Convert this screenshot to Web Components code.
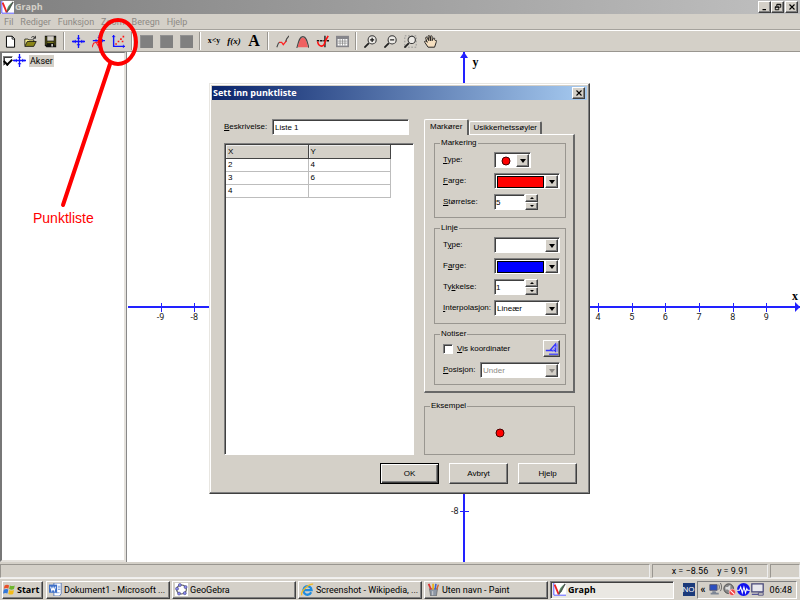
<!DOCTYPE html>
<html lang="nb">
<head>
<meta charset="utf-8">
<title>Graph</title>
<style>
  html, body { margin: 0; height: 100%; }
  body {
    --face: #d4d0c8; --light: #fff; --shade: #808080; --dark: #404040;
    --ui: "Liberation Sans", sans-serif;
    --tahoma: "Roboto", "Liberation Sans", sans-serif;
    --tahoma-bold: "Open Sans", "DejaVu Sans", sans-serif;
    overflow: hidden; color: #000; font: 9px/12px var(--tahoma);
  }
</style>
</head>
<body>
<graph-desktop></graph-desktop>
<script>
const ICONS = {
  logo: '<path fill="#fff" d="M0 0h16v16H0z"/><path d="M1 0v15h15" stroke="#33f" fill="none"/><path d="M7 14c0-6 3-10 8-13l-4 9z" fill="#596"/><path d="M2 2l5 12" stroke="#e22" stroke-width="2.200"/><path d="M7 14L15 1" stroke="#555" stroke-width="1.600"/>',
  doc: '<path d="M3 1.500h7l3 3V15H3z" fill="#fff" stroke="#000" stroke-width="1.200"/><path d="M10 1.500v3.500h3" fill="none" stroke="#000"/>',
  open: '<path d="M1 13V5h4l1 1h6v3" fill="#f4ec90" stroke="#111"/><path d="M1 14l3-6h11l-3 6z" fill="#8a8518" stroke="#111"/><path d="M9 3c2-2 4-1 5 1m0-3v3h-3" fill="none" stroke="#111"/>',
  save: '<path d="M1 1h14v14H3l-2-2z" fill="#111"/><path d="M4 1.500h8V7H4z" fill="#d4d0c8"/><path d="M2 2h1v10H2zM13 3h1v10h-1z" fill="#77751c"/><path d="M4 8h8v2H4z" fill="#77751c"/><path d="M9 11h2v3H9z" fill="#d4d0c8"/>',
  axes: '<path d="M8 0v16M0 8h16" stroke="#11f" stroke-width="1.600"/><path d="M4 6v4M12 6v4M6 4h4M6 12h4M2 7v2M14 7v2" stroke="#11f" stroke-width="1.200"/>',
  func: '<path d="M9 0v16M1 7h15" stroke="#11f" stroke-width="1.600"/><path d="M5 5v4M13 5v4M7 3h4M7 12h4" stroke="#11f"/><path d="M0 15l2-5 3-1 3 5M6 10l6-9" fill="none" stroke="#f22" stroke-width="1.400"/>',
  points: '<path d="M2 0v14h14" fill="none" stroke="#11f" stroke-width="1.700"/><path d="M0 2h4M14 12v4" stroke="#11f"/><path d="M4 10h2v2H4zM7 7h2v2H7zM10 4h2v2h-2zM13 1h2v2h-2zM12 7h2v2h-2z" fill="#f11"/>',
  block: '<path d="M0 0h16v16H0z" fill="#808080"/><path d="M.5 16V.5H16" fill="none" stroke="#999"/>',
  curve: '<path d="M1 15l2-5 2-1" fill="none" stroke="#444" stroke-width="1.300"/><path d="M4 9l3 0 2 3 4-5" fill="none" stroke="#f22" stroke-width="1.600"/><path d="M12 8l1-3 3-4" fill="none" stroke="#444" stroke-width="1.300"/>',
  area: '<path d="M2 15C4 8 5 3 8.500 3S13 8 15 15z" fill="#f06060"/><path d="M1 16C3 9 4 2 8.500 2S14 9 16 16" fill="none" stroke="#444" stroke-width="1.300"/>',
  tangent: '<path d="M11 1v14" stroke="#111" stroke-width="1.600"/><path d="M1 7h15" stroke="#111" stroke-width="2" stroke-dasharray="3 1"/><path d="M2 8c1 7 8 8 9 0l4-7" fill="none" stroke="#f11" stroke-width="2"/>',
  table: '<path d="M0 1h16v14H0z" fill="#85858a"/><path d="M2 5h12v8H2z" fill="#fff"/><path d="M2 7.500h12M2 10h12M5 5v8M8 5v8M11 5v8" stroke="#777" stroke-width=".8"/>',
  zin: '<circle cx="10" cy="6" r="5" fill="#eceae6" stroke="#333" stroke-width="1.300"/><path d="M6 10l-5.500 5.500" stroke="#222" stroke-width="2.200"/><path d="M10 3.500v5M7.500 6h5" stroke="#111" stroke-width="1.400"/>',
  zout: '<circle cx="10" cy="6" r="5" fill="#eceae6" stroke="#333" stroke-width="1.300"/><path d="M6 10l-5.500 5.500" stroke="#222" stroke-width="2.200"/><path d="M7.500 6h5" stroke="#111" stroke-width="1.400"/>',
  zbox: '<path d="M1 1h14v14H1z" fill="none" stroke="#888" stroke-dasharray="2 2"/><circle cx="9.500" cy="6" r="4.500" fill="#eceae6" stroke="#333" stroke-width="1.300"/><path d="M6 10l-5.500 5.500" stroke="#222" stroke-width="2.200"/>',
  hand: '<path d="M5 15L1 9c-1-2 1-2 2-1l1 1L2 4c0-2 2-2 2 0l2 3-1-5c0-2 2-2 2 0l1 5V2c0-2 2-1 2 0v5l1.500-3c1-1 2 0 1.500 1.500L14 7c2-1 2 1 1 2l-2 6z" fill="#f5dfc0" stroke="#222" stroke-width="1.200"/>',
  min: '<path d="M3 12h7v2.500H3z" fill="#000"/>',
  restore: '<path d="M5.500 2.500h8v6h-3M5.500 3.500h8M5.500 3v3" fill="none" stroke="#000" stroke-width="1.800"/><path d="M2.500 7.500h7v6h-7zM2 8.500h8" fill="none" stroke="#000" stroke-width="1.800"/>',
  close: '<path d="M3 3l10 10M13 3L3 13" stroke="#000" stroke-width="2.200"/>',
  fontA: '<path d="M1 10.500h5l7-8v10M4 10.500h9" fill="none" stroke="#33f" stroke-width="1.700"/><path d="M9 12l6-9v9" fill="none" stroke="#77f" stroke-width="1.300"/><path d="M5 15h11" stroke="#33f" stroke-width="1.500"/>',
  windows: '<path d="M2 3c2-1 4-1 5.500 0L6.500 7C5 6 3 6 1 7z" fill="#e8502a"/><path d="M8.500 3c2 1 4 1 6 0l-1 4.500c-2 1-4 1-6 0z" fill="#6fb52c"/><path d="M1 8c2-1 4-1 5.500 0L5.500 13C4 12 2 12 0 13z" fill="#3578d8"/><path d="M7.500 8.500c2 1 4 1 6 0l-1 5c-2 1-4 1-6 0z" fill="#f5bd18"/>',
  word: '<path d="M6 0h9v13l-2 3H6z" fill="#fff" stroke="#4a6cb0"/><path d="M11 4h3M11 6h3M11 8h3M8 12h5" stroke="#6b94d8"/><path d="M0 2h10v10H0z" fill="#3c6fc8"/><path d="M2 4.500l1.500 5 1.500-4 1.500 4 1.500-5" fill="none" stroke="#fff" stroke-width="1.300"/>',
  geo: '<path d="M0 0h16v16H0z" fill="#fff"/><ellipse cx="8" cy="8" rx="6" ry="5.500" fill="none" stroke="#555" stroke-width="1.300"/><g fill="#8888ee" stroke="#336" stroke-width=".6"><circle cx="2.500" cy="7" r="1.900"/><circle cx="6" cy="2.500" r="1.900"/><circle cx="13" cy="5" r="1.900"/><circle cx="12" cy="12.500" r="1.900"/><circle cx="5" cy="13" r="1.900"/></g>',
  ie: '<path d="M12.500 11.500A5 5.300 0 1 1 13 8.700H4" fill="none" stroke="#1f8ce0" stroke-width="2.800"/><path d="M1 15C-1 11 9 1 15 1.500" fill="none" stroke="#f2b822" stroke-width="1.600"/>',
  paint: '<path d="M3 7h10l-1.500 9h-7z" fill="#8d97a5" stroke="#555" stroke-width=".7"/><path d="M5 8L2 1" stroke="#d33" stroke-width="2.200"/><path d="M7.500 8V1" stroke="#e8b21c" stroke-width="2.200"/><path d="M10 8l1-7" stroke="#3a62d0" stroke-width="2"/><path d="M12 8l2-6" stroke="#c63" stroke-width="1.800"/><path d="M7 10v5" stroke="#ddd"/>',
  net: '<path d="M1 2h9v7H1z" fill="#2c4fc0" stroke="#556"/><path d="M4 10h4l1 2h3v2H2v-2h2z" fill="#7c8594"/><path d="M12 2c1 2 1 4 0 6M14 0c2 3 2 7 0 10" fill="none" stroke="#555"/>',
  speaker: '<circle cx="7" cy="7" r="6" fill="#888" stroke="#444"/><path d="M3 5l3 0 3-3v9L6 8H3z" fill="#ddd"/><circle cx="11.500" cy="11.500" r="4" fill="#e44" stroke="#fff" stroke-width=".6"/><path d="M9 9l5 5" stroke="#fff" stroke-width="1.300"/>',
  wave: '<circle cx="8" cy="8" r="8" fill="#11e"/><path d="M0 9h3l1.500-4 2 7 2-7 2 7 1.500-5 1 2h3" fill="none" stroke="#fff" stroke-width="1.300"/>',
  monitor: '<path d="M1 1h14v10H1z" fill="#e8e8ee" stroke="#447" stroke-width="1.500"/><path d="M1 14h14" stroke="#559" stroke-width="1.600"/><path d="M9 12h6v3H9z" fill="#d4d0c8" stroke="#447"/>'
};

function define(name, css, render) {
  customElements.define(name, class extends HTMLElement {
    constructor() { super(); this.attachShadow({ mode: "open" }); }
    connectedCallback() {
      if (this.shadowRoot.childNodes.length) return;
      const t = document.createElement("template");
      t.innerHTML = `<style>*{box-sizing:border-box}${css}</style>${render(this)}`;
      this.shadowRoot.append(t.content.cloneNode(true));
    }
  });
}
const accel = s => s.replace(/_(.)/, "<u>$1</u>");
const at = (el, n, d = "") => el.getAttribute(n) ?? d;
const RAISED = "border:1px solid;border-color:var(--light) var(--dark) var(--dark) var(--light);box-shadow:inset -1px -1px 0 var(--shade);background:var(--face)";
const SUNKEN = "border:1px solid;border-color:var(--shade) var(--light) var(--light) var(--shade);box-shadow:inset 1px 1px 0 var(--dark)";

define("ui-icon", ":host{display:block;flex:none;width:13px;height:13px} svg{display:block;width:100%;height:100%}",
  el => `<svg viewBox="0 0 16 16" fill="none" aria-hidden="true">${ICONS[at(el, "name")]}</svg>`);

define("caption-button", `:host{display:block;flex:none} button{display:grid;place-items:center;width:13px;height:12px;padding:0;${RAISED}} ui-icon{width:8px;height:8px}`,
  el => `<button aria-label="${at(el, "label")}"><ui-icon name="${at(el, "icon")}"></ui-icon></button>`);

define("title-bar", `
  :host{display:flex;align-items:center;flex:none;height:14px;padding:0 2px 0 1px;gap:1px;background:linear-gradient(90deg,#808080,#c0c0c0);color:#d4d0c8}
  :host([active]){background:linear-gradient(90deg,#0a246a,#a6caf0);color:#fff}
  h1{flex:1;margin:0;font:bold 9px/12px var(--tahoma-bold)}
  div{display:flex}`,
  () => `<slot name="icon"></slot><h1><slot></slot></h1><div><slot name="sizers"></slot></div><slot name="close"></slot>`);

define("menu-bar", `
  :host{display:block;flex:none;border-bottom:1px solid #a5a29c}
  nav{display:flex;gap:7px;padding:2px 4px;height:15px}
  button{border:0;padding:0;background:none;color:#8c8984;font:9px/12px var(--tahoma)}`,
  () => `<nav>${["Fil", "Rediger", "Funksjon", "Zoom", "Beregn", "Hjelp"].map(t => `<button>${t}</button>`).join("")}</nav>`);

define("tool-bar", `
  :host{display:flex;flex:none;align-items:center;height:22px;border-top:1px solid #fff;border-bottom:1px solid #999690}
  .sep{width:2px;height:18px;margin:0 3px;border-left:1px solid #999690;border-right:1px solid #fff}
  button{display:grid;place-items:center;width:20px;height:20px;padding:0;border:0;background:none;font:bold 8px/12px "Liberation Serif",serif}
  .italic{font-style:italic;font-size:9px} .big{font-size:16px}`,
  () => [
    ["doc:Ny", "open:Åpne", "save:Lagre"], ["axes:Akser", "func:Sett inn funksjon", "points:Sett inn punktliste"],
    ["block:Tangent", "block:Skravering", "block:Relasjon"], ["=x&lt;y", "italic=f(x)", "big=A"],
    ["curve:Kurvelengde", "area:Areal", "tangent:Evaluer", "table:Tabell"], ["zin:Zoom inn", "zout:Zoom ut", "zbox:Zoom vindu", "hand:Flytt"]
  ].map(g => g.map(b => {
    if (b.includes("=")) { const [c, t] = b.split("="); return `<button class="${c}">${t}</button>`; }
    const [i, l] = b.split(":"); return `<button aria-label="${l}"><ui-icon name="${i}"></ui-icon></button>`;
  }).join("")).join('<span class="sep"></span>'));

define("tick-box", `
  :host{display:block} label{display:flex;align-items:center;gap:4px;white-space:nowrap}
  input{appearance:none;display:grid;place-items:center;width:10px;height:10px;margin:0;background:#fff;${SUNKEN}}
  input:checked::after{content:"";width:6px;height:4px;border:solid #000;border-width:0 0 2px 2px;transform:rotate(-45deg)}`,
  el => `<label><input type="checkbox"${el.hasAttribute("checked") ? " checked" : ""}${el.hasAttribute("name") ? ` aria-label="${at(el, "name")}"` : ""}><slot></slot></label>`);

define("function-list", `
  :host{display:block;flex:none;width:126px;padding-top:1px;background:#fff;border:solid;border-width:1px 2px 2px 2px;border-color:#777 #e4e1dc #e4e1dc #777}
  .row{display:flex;align-items:center;padding:0 1px;height:13px}
  .name{margin-left:3px;padding:0 1px;background:var(--face)}`,
  () => `<div class="row"><tick-box checked name="Vis akser"></tick-box><ui-icon name="axes"></ui-icon><span class="name">Akser</span></div>`);

define("graph-plot", `
  :host{display:block;position:relative;flex:1;min-width:0;overflow:hidden;background:#fff;border-left:1px solid #888}
  .ax{position:absolute;background:#2222ff} .x{left:1px;right:0;top:50%;height:2px;margin-top:-1px} .y{top:0;bottom:0;left:50%;width:2px;margin-left:-1px}
  .arrow{position:absolute;width:0;height:0;border:solid transparent}
  .right{right:0;top:50%;margin-top:-5px;border-width:5px 0 5px 5px;border-left-color:#22f}
  .up{top:0;left:50%;margin-left:-4px;border-width:0 4px 6px;border-bottom-color:#22f}
  .tx{position:absolute;top:50%;width:1px;height:9px;margin-top:-4px;background:#22f}
  .ty{position:absolute;left:50%;height:1px;width:9px;margin-left:-4px;background:#22f}
  span{position:absolute;color:#222} .lx{top:50%;width:20px;margin:4px 0 0 -10px;text-align:center}
  .ly{right:50%;margin:-6px 5px 0 0}
  b{position:absolute;font:bold 12px/12px "Liberation Serif",serif} .nx{right:2px;top:50%;margin-top:-17px} .ny{left:50%;top:4px;margin-left:9px}`,
  () => {
    let h = '<div class="ax x"></div><div class="ax y"></div><i class="arrow right"></i><i class="arrow up"></i><b class="nx">x</b><b class="ny">y</b>';
    for (let i = -9; i <= 9; i++) {
      if (!i) continue;
      h += `<i class="tx" style="left:${50 + i * 5}%"></i>`;
      if (i < -7 || i > 3) h += `<span class="lx" style="left:${50 + i * 5}%">${i}</span>`;
    }
    return h + '<i class="ty" style="top:90%"></i><span class="ly" style="top:90%">-8</span>';
  });

define("status-bar", `
  :host{display:flex;flex:none;gap:2px;height:16px;padding:2px 0 0}
  div{border:1px solid;border-color:#999690 #eee #eee #999690;white-space:pre;text-align:center;line-height:12px}
  .wide{flex:1} .pos{width:116px} .end{width:30px}`,
  () => `<div class="wide"></div><div class="pos">x = −8.56    y = 9.91</div><div class="end"></div>`);

define("group-box", `
  :host{display:block} fieldset{margin:0;min-width:0;padding:4px 5px 7px 8px;border:1px solid #999690}
  legend{padding:0 1px;margin-left:-3px;font:8px/10px var(--ui)}
  .rows{display:flex;flex-direction:column;gap:5px}
  :host([tight]) fieldset{padding-top:1px;padding-bottom:6px}
  :host([sample]) fieldset{padding:6px 0 9px} :host([sample]) legend{margin-left:5px} :host([sample]) .rows{align-items:center}`,
  el => `<fieldset><legend>${at(el, "title-text")}</legend><div class="rows"><slot></slot></div></fieldset>`);

define("combo-box", `
  :host{display:flex;align-items:center;height:16px;font:8px/12px var(--ui)}
  label{width:51px;flex:none;white-space:nowrap} :host([compact]) label{width:37px}
  .box{display:grid;flex:1;height:16px;grid-template-columns:1fr 13px;align-items:center;background:#fff;padding:1px;${SUNKEN}}
  :host([short]) .box{flex:none;width:37px}
  select{grid-area:1/1/2/3;appearance:none;width:100%;height:12px;margin:0;border:0;padding:0 14px 0 1px;background:none;color:#000;font:8px/12px var(--ui);opacity:1}
  select:disabled{color:#8c8984}
  .swatch{grid-area:1/1;height:12px;margin:0 1px;border:1px solid #000}
  svg{grid-area:1/1;justify-self:center;width:10px;height:10px}
  .arrow{grid-area:1/2;display:grid;place-items:center;height:13px;pointer-events:none;${RAISED}}
  .arrow::after{content:"";border:solid transparent;border-width:4px 3px 0;border-top-color:#000}
  select:disabled ~ .arrow::after{border-top-color:#8c8984}`,
  el => `<label for="s">${accel(at(el, "label"))}</label><div class="box"><select id="s"${el.hasAttribute("disabled") ? " disabled" : ""}><option>${at(el, "value")}</option></select>` +
    (el.hasAttribute("color") ? `<span class="swatch" style="background:${at(el, "color")}"></span>` : "") +
    (el.hasAttribute("marker") ? `<svg viewBox="0 0 10 10"><circle cx="5" cy="5" r="4" fill="#f00" stroke="#400"/></svg>` : "") +
    `<span class="arrow"></span></div>`);

define("spin-box", `
  :host{display:flex;align-items:center;height:16px;font:8px/12px var(--ui)} label{width:51px;flex:none}
  input{width:31px;height:16px;padding:0 1px;border-radius:0;font:8px/12px var(--ui);background:#fff;${SUNKEN}}
  div{display:grid;width:13px;height:16px}
  button{display:grid;place-items:center;height:8px;padding:0;${RAISED}}
  button::after{content:"";border:solid transparent;border-width:0 2px 2px;border-bottom-color:#000}
  button+button::after{border-width:2px 2px 0;border-top-color:#000}`,
  el => `<label for="n">${accel(at(el, "label"))}</label><input id="n" value="${at(el, "value")}"><div><button aria-label="Opp"></button><button aria-label="Ned"></button></div>`);

define("push-button", `
  :host{display:block} button{display:block;width:59px;height:21px;padding:0;font:8px/12px var(--ui);${RAISED}}
  :host([default]) button{border-color:#000;box-shadow:inset 1px 1px 0 #fff,inset -1px -1px 0 var(--dark),inset -2px -2px 0 var(--shade)}`,
  () => `<button><slot></slot></button>`);

define("point-table", `
  :host{display:block;background:#fff;${SUNKEN};padding:1px}
  table{border-collapse:separate;border-spacing:0;width:165px;table-layout:fixed;font:8px/12px var(--ui)}
  th,td{height:13px;padding:0 2px;text-align:left;font-weight:normal;border:solid #bdbdbd;border-width:0 1px 1px 0}
  th{height:14px;background:var(--face);border-color:#444;box-shadow:inset 1px 1px 0 #eee}`,
  () => `<table><thead><tr><th>X</th><th>Y</th></tr></thead><tbody><tr><td>2</td><td>4</td></tr><tr><td>3</td><td>6</td></tr><tr><td>4</td><td></td></tr></tbody></table>`);

define("tab-panel", `
  :host{display:block;font:8px/12px var(--ui)}
  .tabs{display:flex;align-items:flex-end;height:15px}
  button{height:13px;padding:0 3px;font:8px/12px var(--ui);white-space:nowrap;background:var(--face);border:solid;border-width:1px 2px 0 1px;border-color:#fff #606060 #fff #fff;border-radius:2px 2px 0 0}
  button[aria-selected=true]{height:16px;margin-bottom:-1px;padding:0 5px 2px;position:relative}
  .page{display:flex;flex-direction:column;gap:5px;padding:3px 7px 6px 9px;border:solid;border-width:1px 2px 2px 1px;border-color:#fff #686868 #686868 #fff}`,
  () => `<div class="tabs" role="tablist"><button role="tab" aria-selected="true">Markører</button><button role="tab" aria-selected="false">Usikkerhetssøyler</button></div><div class="page" role="tabpanel"><slot></slot></div>`);

define("point-dialog", `
  :host{display:block;background:var(--face);border:1px solid;border-color:#e8e6e1 var(--dark) var(--dark) #e8e6e1;box-shadow:inset -1px -1px 0 var(--shade),inset 1px 1px 0 #fff;padding:2px 2px 9px;font:8px/12px var(--ui)}
  .body{display:grid;grid-template-columns:190px 151px;gap:0 10px;padding:19px 12px 0}
  .left{display:flex;flex-direction:column;gap:8px}
  .desc{display:flex;align-items:center;height:16px} .desc label{width:48px}
  .desc input{width:137px;height:16px;padding:0 2px;font:8px/12px var(--ui);background:#fff;${SUNKEN}}
  point-table{flex:1}
  .right{display:flex;flex-direction:column;gap:8px}
  .note{display:flex;justify-content:space-between;align-items:center;height:17px}
  .note button{display:grid;place-items:center;width:17px;height:17px;padding:0;${RAISED}}
  .buttons{display:flex;justify-content:flex-end;gap:10px;padding:8px 10px 0}
  svg{display:block;width:10px;height:28px}`,
  () => `<title-bar active>Sett inn punktliste<caption-button slot="close" icon="close" label="Lukk"></caption-button></title-bar>
  <div class="body">
    <div class="left"><div class="desc"><label for="d"><u>B</u>eskrivelse:</label><input id="d" value="Liste 1"></div><point-table></point-table></div>
    <div class="right">
      <tab-panel>
        <group-box title-text="Markering"><combo-box label="_Type:" marker short></combo-box><combo-box label="_Farge:" color="#f00"></combo-box><spin-box label="_Størrelse:" value="5"></spin-box></group-box>
        <group-box title-text="Linje"><combo-box label="T_ype:"></combo-box><combo-box label="F_arge:" color="#00f"></combo-box><spin-box label="Ty_kkelse:" value="1"></spin-box><combo-box label="_Interpolasjon:" value="Lineær"></combo-box></group-box>
        <group-box title-text="Notiser" tight><div class="note"><tick-box><span><u>V</u>is koordinater</span></tick-box><button aria-label="Skrift"><ui-icon name="fontA"></ui-icon></button></div><combo-box label="_Posisjon:" value="Under" compact disabled></combo-box></group-box>
      </tab-panel>
      <group-box title-text="Eksempel" sample><svg viewBox="0 0 10 28"><circle cx="5" cy="16" r="4" fill="#f00" stroke="#400"/></svg></group-box>
    </div>
  </div>
  <div class="buttons"><push-button default>OK</push-button><push-button>Avbryt</push-button><push-button>Hjelp</push-button></div>`);

define("task-button", `
  :host{display:block;flex:1;min-width:0;max-width:124px} button{display:flex;align-items:center;gap:2px;width:100%;height:18px;padding:0 2px;font:9px/12px var(--tahoma);white-space:nowrap;overflow:hidden;${RAISED}}
  :host([start]){flex:none} :host([start]) button,:host([pressed]) button{font:bold 9px/12px var(--tahoma-bold)}
  :host([start]) button{gap:1px;padding:0 1px 0 0}
  :host([pressed]) button{${SUNKEN};background:#eae8e3}`,
  el => `<button><ui-icon name="${at(el, "icon")}"></ui-icon><slot></slot></button>`);

define("task-bar", `
  :host{display:flex;flex:none;align-items:center;height:22px;padding:0 3px 0 2px;gap:2px;border-top:1px solid #f4f2ee;background:var(--face)}
  task-button[start]{width:41px;margin-right:1px}
  .lang{display:grid;place-items:center;width:12px;height:13px;margin:0 0 0 auto;background:#1b3a7a;color:#fff;font:8px/12px var(--ui)}
  .tray{display:flex;align-items:center;height:18px;gap:1px;padding:0 4px 0 3px;border:1px solid;border-color:var(--shade) #fff #fff var(--shade)}
  .more{border:0;padding:0 2px 0 0;background:none;font:bold 10px/12px var(--tahoma)}
  time{margin-left:5px}`,
  () => `<task-button start icon="windows">Start</task-button><task-button icon="word">Dokument1 - Microsoft ...</task-button><task-button icon="geo">GeoGebra</task-button><task-button icon="ie">Screenshot - Wikipedia, ...</task-button><task-button icon="paint">Uten navn - Paint</task-button><task-button pressed icon="logo">Graph</task-button>
  <span class="lang">NO</span><div class="tray"><button class="more">«</button><ui-icon name="net"></ui-icon><ui-icon name="speaker"></ui-icon><ui-icon name="wave"></ui-icon><ui-icon name="monitor"></ui-icon><time>06:48</time></div>`);

define("callout-note", `
  :host{display:block;position:absolute;left:0;top:0;pointer-events:none;color:#f00;font:14px/16px "Liberation Sans",sans-serif}
  svg{display:block;width:140px;height:210px} p{margin:0;padding-left:33px}`,
  () => `<svg viewBox="0 0 140 210" fill="none" stroke="#f00" stroke-width="4" stroke-linecap="round"><ellipse cx="118" cy="42" rx="18" ry="22"/><path d="M110 64L63 205"/></svg><p>Punktliste</p>`);

define("graph-desktop", `
  :host{display:flex;flex-direction:column;height:100vh;position:relative;background:var(--face)}
  main{display:flex;flex:1;min-height:0}
  point-dialog{position:absolute;left:209px;top:83px;width:381px}`,
  () => `<title-bar><ui-icon slot="icon" name="logo"></ui-icon>Graph<caption-button slot="sizers" icon="min" label="Minimer"></caption-button><caption-button slot="sizers" icon="restore" label="Gjenopprett"></caption-button><caption-button slot="close" icon="close" label="Lukk"></caption-button></title-bar>
  <menu-bar></menu-bar><tool-bar></tool-bar>
  <main><function-list></function-list><graph-plot></graph-plot></main>
  <status-bar></status-bar><task-bar></task-bar><point-dialog></point-dialog><callout-note></callout-note>`);
</script>
</body>
</html>
